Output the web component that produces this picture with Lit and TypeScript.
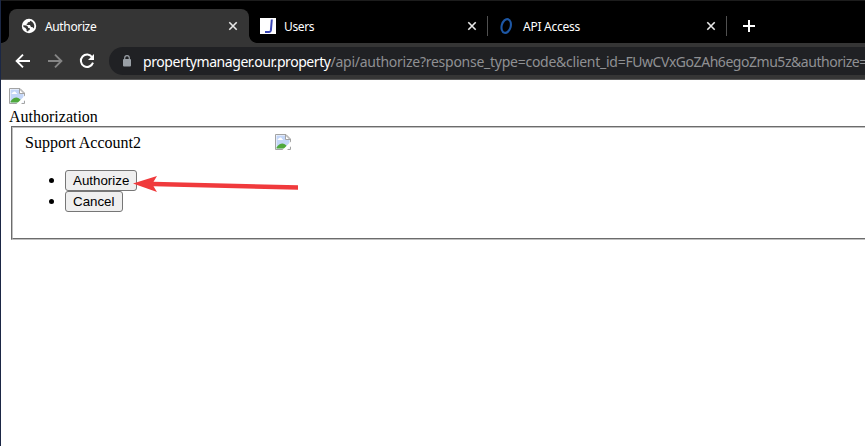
import { LitElement, html, css, svg } from "lit";
import { customElement } from "lit/decorators.js";

const closeIcon = html`<svg class="close" width="10" height="10" viewBox="0 0 10 10">
  <path d="M1.3 1.3 8.7 8.7M8.7 1.3 1.3 8.7" stroke="#e8e8e8" stroke-width="1.6" fill="none"/></svg>`;

const globeIcon = svg`<svg class="fav" width="16" height="16" viewBox="0 0 16 16">
  <circle cx="8" cy="8" r="7.2" fill="#fff"/>
  <path d="M2.2 7.2 5.4 7.5 7 8.8 7.2 10 9 10.3 8.6 12 7.3 12.4 7.1 13.4 5.6 12.9 5.6 11.4 4.2 9.8 2.5 9Z" fill="#353535"/>
  <path d="M9 2.7 8.8 3.9 6.9 4.2 6.6 5.6 5.4 6 6 6.9 9 7 10 8.9 11.8 9.2 12.2 10.4 13.1 9.6 13.3 7.4 12.6 5.4 11.2 3.7Z" fill="#353535"/>
</svg>`;

const usersIcon = svg`<svg class="fav" width="16" height="16" viewBox="0 0 16 16">
  <rect width="16" height="16" fill="#fff"/>
  <path d="M11.8 1.5 10.9 12.4Q10.7 14 9.2 14H5" stroke="#3945b5" stroke-width="2" fill="none"/>
</svg>`;

const ringIcon = svg`<svg class="fav" width="16" height="16" viewBox="0 0 16 16">
  <ellipse cx="7.2" cy="8" rx="4.5" ry="7" transform="rotate(15 7.2 8)" stroke="#1d57a5" stroke-width="2.1" fill="none"/>
</svg>`;

const brokenImage = html`<svg class="broken" width="16" height="16" viewBox="0 0 16 16">
  <path d="M.5.5H11L15.5 5V15.5H.5Z" fill="#fff"/>
  <path d="M1.5 1.5H10.5V5.5H14.5V14.5H1.5Z" fill="#c3d6f8"/>
  <path d="M2.6 6Q2.6 4.6 4 4.6 4.6 3.2 5.8 3.6 7 3.8 7 4.8 8 5 8 6Z" fill="#fff"/>
  <path d="M1.5 14.5V13.6Q4 9.6 7.6 9.6 11.2 9.9 13 14.5Z" fill="#4fa83d"/>
  <path d="M.5 15.5V.5H11L15.5 5V15.5Z" fill="none" stroke="#a3a3a3"/>
  <path d="M10.5 1V5.5H15Z" fill="#fff" stroke="#a3a3a3"/>
  <path d="M16 7.6 7.4 16H12L16 12.2Z" fill="#fff"/>
</svg>`;

@customElement("app-root")
export class AppRoot extends LitElement {
  static styles = css`
    :host { display: block; width: 865px; height: 446px; box-sizing: border-box; overflow: hidden;
      background: #fff; border-left: 1px solid #1b2745; position: relative; }
    .chrome { font-family: "Noto Sans", sans-serif; background: #353535; height: 80px;
      box-sizing: border-box; border-bottom: 1px solid #5b5b5b; }
    .strip { height: 43px; box-sizing: border-box; border-top: 1px solid #1c1c1c; background: #000;
      display: flex; align-items: flex-end; padding-left: 8px; }
    .tab { height: 34px; box-sizing: border-box; display: flex; align-items: center; color: #fff;
      font-size: 12px; padding: 0 11px 0 12px; width: 240px; }
    .tab.idle { width: 239px; padding-left: 11px; background: linear-gradient(#505050, #505050) right 7px / 1px 20px no-repeat; }
    .active { background: #353535; border-radius: 8px 8px 0 0; position: relative; }
    .active::before, .active::after { content: ""; position: absolute; bottom: 0; width: 8px; height: 8px; }
    .active::before { left: -8px; background: radial-gradient(circle at 0 0, #000 7.5px, #353535 8.2px); }
    .active::after { right: -8px; background: radial-gradient(circle at 100% 0, #000 7.5px, #353535 8.2px); }
    .title { flex: 1; margin-left: 8px; white-space: nowrap; letter-spacing: -0.36px; }
    .last .title { letter-spacing: -0.26px; }
    svg { display: block; flex: none; }
    .plus { margin: 0 0 11px 16px; }
    .bar { height: 36px; display: flex; align-items: center; }
    .nav { margin-left: 14px; }
    .nav + .nav { margin-left: 16px; }
    .omni { margin-left: 14px; height: 28px; flex: 1; background: #202124; border-radius: 14px 0 0 14px;
      display: flex; align-items: center; font-size: 14px; white-space: nowrap; overflow: hidden; padding-left: 13px; }
    .url { margin-left: 11px; color: #8f9093; }
    .host { color: #fff; letter-spacing: -0.44px; }
    .path { letter-spacing: -0.26px; }
    .query { letter-spacing: -0.46px; }
    .page { padding: 8px; font: 16px/18px "Liberation Serif", serif; color: #000; width: 1100px; box-sizing: border-box; }
    .logo { height: 20px; }
    fieldset { margin: 0 2px; border: 2px groove #c0c0c0; padding: 0 12px; height: 114px; box-sizing: border-box; }
    .row { display: flex; padding-top: 6px; height: 26px; box-sizing: border-box; }
    .account { width: 250px; }
    ul { margin: 15px 0; padding-left: 40px; }
    li { height: 21px; line-height: 21px; }
    button { font: 13.333px "Liberation Sans", sans-serif; height: 21px; box-sizing: border-box; padding: 1px 7px;
      border: 1px solid #767676; border-radius: 3px; background: #efefef; color: #000; margin: 0; display: block; }
    .arrow { position: absolute; left: 132px; top: 174px; }
  `;

  render() {
    return html`
      <div class="chrome">
        <div class="strip">
          <div class="tab active">${globeIcon}<span class="title">Authorize</span>${closeIcon}</div>
          <div class="tab idle">${usersIcon}<span class="title">Users</span>${closeIcon}</div>
          <div class="tab idle last">${ringIcon}<span class="title">API Access</span>${closeIcon}</div>
          <svg class="plus" width="12" height="12" viewBox="0 0 12 12"><path d="M6 0V12M0 6H12" stroke="#fff" stroke-width="2"/></svg>
        </div>
        <div class="bar">
          <svg class="nav" width="16" height="16" viewBox="0 0 16 16"><path d="M15 8H2M8 1.6 1.6 8 8 14.4" fill="none" stroke="#fff" stroke-width="1.9"/></svg>
          <svg class="nav" width="16" height="16" viewBox="0 0 16 16"><path d="M1 8H14M8 1.6 14.4 8 8 14.4" fill="none" stroke="#858585" stroke-width="1.9"/></svg>
          <svg class="nav" width="16" height="16" viewBox="0 0 16 16"><path d="M13.2 4.2A6.2 6.2 0 1 0 14 9.6" fill="none" stroke="#fff" stroke-width="2"/><path d="M15 1V7H9Z" fill="#fff"/></svg>
          <div class="omni">
            <svg width="10" height="12" viewBox="0 0 10 12"><rect x="1" y="4" width="8" height="7.5" rx="1" fill="#9aa0a6"/><path d="M2.7 4.5V2.9a2.3 2.3 0 0 1 4.6 0V4.5" fill="none" stroke="#9aa0a6" stroke-width="1.2"/></svg>
            <span class="url"><span class="host">propertymanager.our.property</span><span class="path">/api/authorize?response_type=code&amp;client_id=</span><span class="query">FUwCVxGoZAh6egoZmu5z&amp;authorize=</span></span>
          </div>
        </div>
      </div>
      <div class="page">
        <div class="logo">${brokenImage}</div>
        <div>Authorization</div>
        <fieldset>
          <div class="row"><span class="account">Support Account2</span>${brokenImage}</div>
          <ul>
            <li><button>Authorize</button></li>
            <li><button>Cancel</button></li>
          </ul>
        </fieldset>
      </div>
      <svg class="arrow" width="168" height="20" viewBox="0 0 168 20">
        <path d="M0 9.5 24 2 20.5 7.8 165 11.2V15.8L20.5 12.2 24 18Z" fill="#f03a3c"/>
      </svg>
    `;
  }
}
